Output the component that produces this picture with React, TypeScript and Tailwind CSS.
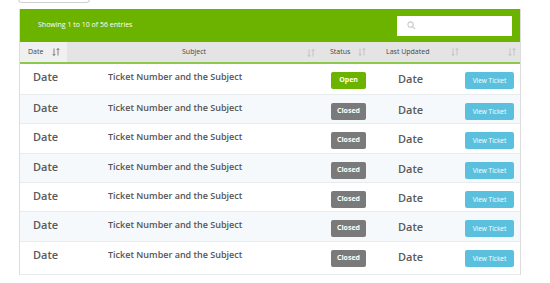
// Ticket list table: green toolbar + sortable header + striped rows
const rows = [
  { status: 'Open', h: 31 },
  { status: 'Closed', h: 29 },
  { status: 'Closed', h: 30 },
  { status: 'Closed', h: 29 },
  { status: 'Closed', h: 29 },
  { status: 'Closed', h: 30 },
  { status: 'Closed', h: 33 },
]

const cols = 'grid grid-cols-[47px_254px_50px_90px_61px]'

function SortIcon({ active = false }: { active?: boolean }) {
  return (
    <svg width="8" height="8" viewBox="0 0 8 8" className={active ? 'text-[#666]' : 'text-[#bbb]'}>
      <path d="M2 0.5v7M0.6 6l1.4 1.5 1.4-1.5" stroke="currentColor" strokeWidth="0.8" fill="none" />
      <path d="M6 7.5v-7M4.6 2l1.4-1.5 1.4 1.5" stroke="currentColor" strokeWidth="0.8" fill="none" />
    </svg>
  )
}

export default function App() {
  return (
    <div className="relative h-[283px] w-[550px] overflow-hidden bg-white font-['Open_Sans',sans-serif]">
      <div className="ml-[18px] h-[4px] w-[72px] -translate-y-px rounded-b-sm border border-t-0 border-[#d0d0d0]" />

      <div className="ml-[19px] mt-[5px] w-[502px] border-x border-[#ddd]">
        <div className="flex h-[33px] items-center justify-between bg-[#6cb300] pl-[18px] pr-[8px]">
          <span className="text-[7px] text-white">Showing 1 to 10 of 56 entries</span>
          <div className="flex h-[20px] w-[115px] items-center bg-white pl-[10px]">
            <svg width="9" height="9" viewBox="0 0 10 10">
              <circle cx="4" cy="4" r="3" stroke="#c8c8c8" strokeWidth="1.2" fill="none" />
              <path d="M6.2 6.2 9 9" stroke="#c8c8c8" strokeWidth="1.3" />
            </svg>
          </div>
        </div>

        <div className={`${cols} h-[22px] border-b-2 border-[#8cc84b] bg-[#e4e4e4] text-[7px] text-[#444]`}>
          <div className="flex items-center gap-[9px] bg-[#f0f0f0] pl-[8px]">
            Date <SortIcon active />
          </div>
          <div className="relative flex items-center justify-center">
            Subject
            <span className="absolute right-[6px] top-[7px]"><SortIcon /></span>
          </div>
          <div className="flex items-center gap-[8px] pl-[9px]">
            Status <SortIcon />
          </div>
          <div className="flex items-center gap-[22px] pl-[15px]">
            Last Updated <SortIcon />
          </div>
          <div className="flex items-center justify-end pr-[6px]">
            <SortIcon />
          </div>
        </div>

        {rows.map((r, i) => (
          <div
            key={i}
            style={{ height: r.h }}
            className={`${cols} items-start border-b border-[#e8ecee] pt-[7px] ${i % 2 === 1 ? 'bg-[#f5f9fb]' : 'bg-white'}`}
          >
            <div className="pl-[13px] text-[11px] font-semibold leading-[12px] text-[#5a5a5a]">Date</div>
            <div className="pl-[41px] text-[9px] font-semibold leading-[12px] text-[#555]">Ticket Number and the Subject</div>
            <div className="flex pl-[10px] pt-[1px]">
              <span
                className={`flex h-[17px] w-[35px] items-center justify-center rounded-[2px] text-[7px] font-bold text-white ${
                  r.status === 'Open' ? 'bg-[#6cb300]' : 'bg-[#7a7a7a]'
                }`}
              >
                {r.status}
              </span>
            </div>
            <div className="pl-[27px] pt-[2px] text-[11px] font-semibold leading-[12px] text-[#5a5a5a]">Date</div>
            <div className="flex pl-[4px] pt-[1px]">
              <span className="flex h-[17px] w-[49px] items-center justify-center rounded-[2px] bg-[#5bc0de] text-[6.5px] text-white">
                View Ticket
              </span>
            </div>
          </div>
        ))}
      </div>
    </div>
  )
}
